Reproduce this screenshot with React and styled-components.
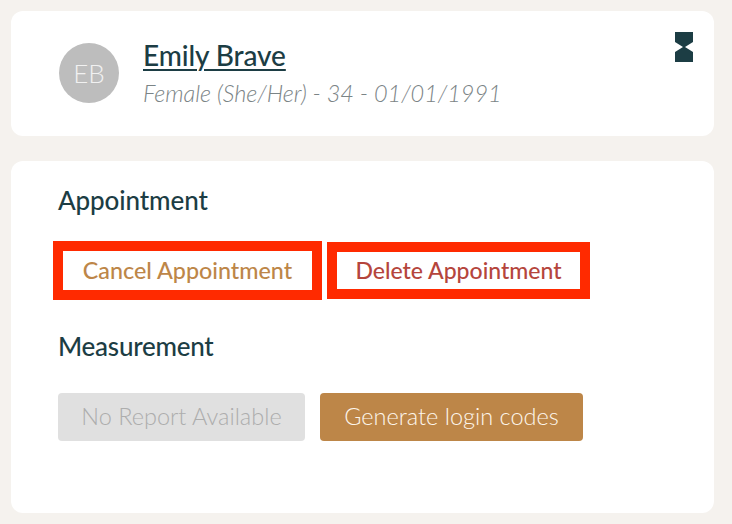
import React from 'react'
import styled, { createGlobalStyle } from 'styled-components'

const GlobalStyle = createGlobalStyle`
  html, body {
    margin: 0;
    padding: 0;
    background: #f5f2ee;
    font-family: Lato, "Open Sans", sans-serif;
  }
`

const Page = styled.div`
  width: 732px;
  height: 524px;
  box-sizing: border-box;
  padding: 11px 18px 11px 11px;
  display: flex;
  flex-direction: column;
  gap: 25px;
  overflow: hidden;
`

const Card = styled.section`
  background: #fff;
  border-radius: 12px;
  box-sizing: border-box;
`

const PatientCard = styled(Card)`
  height: 125px;
  padding: 32px 21px 0 48px;
  display: flex;
  align-items: flex-start;
`

const Avatar = styled.div`
  width: 60px;
  height: 60px;
  border-radius: 50%;
  background: #bdbdbd;
  color: #f1f1f1;
  font-size: 26px;
  font-weight: 300;
  display: flex;
  align-items: center;
  justify-content: center;
  flex-shrink: 0;
`

const PatientInfo = styled.div`
  margin-left: 24px;
  margin-top: -5px;
  flex: 1;
`

const Name = styled.a`
  display: inline-block;
  color: #1c3d44;
  font-size: 28px;
  line-height: 34px;
  font-weight: 500;
  letter-spacing: -0.1px;
  text-decoration: underline;
  text-decoration-thickness: 2px;
  text-underline-offset: 3px;
`

const Details = styled.div`
  margin-top: 7px;
  color: #7b8486;
  font-size: 23.5px;
  line-height: 28px;
  font-style: italic;
  font-weight: 300;
  letter-spacing: -0.05px;
`

const Hourglass = styled.svg`
  width: 18px;
  height: 30px;
  flex-shrink: 0;
  margin-top: -11px;
`

const ActionsCard = styled(Card)`
  height: 352px;
  padding: 23px 47px 0;
`

const Heading = styled.h2`
  margin: ${props => props.$margin || 0};
  color: #1c3d44;
  font-size: 26px;
  line-height: 32px;
  font-weight: 500;
  letter-spacing: ${props => props.$tracking || -0.1}px;
`

const Row = styled.div`
  display: flex;
  align-items: ${props => props.$center ? 'center' : 'flex-start'};
  gap: ${props => props.$gap}px;
  margin: ${props => props.$margin};
`

const OutlinedAction = styled.button`
  box-sizing: border-box;
  width: ${props => props.$width}px;
  height: ${props => props.$height}px;
  padding: 0 0 2px;
  border: 10px solid #ff2a00;
  background: #fff;
  color: ${props => props.$color};
  font-family: inherit;
  font-size: ${props => props.$size}px;
  font-weight: 500;
  text-align: center;
`

const SolidAction = styled.button`
  box-sizing: border-box;
  width: ${props => props.$width}px;
  height: 48px;
  padding: 0 0 2px;
  border: 0;
  border-radius: 4px;
  background: ${props => props.$disabled ? '#e0e0e0' : '#bd8648'};
  color: ${props => props.$disabled ? '#adadad' : '#fdf6ec'};
  font-family: inherit;
  font-size: 23.5px;
  font-weight: 300;
  text-align: center;
`

export default function App() {
  return (
    <Page>
      <GlobalStyle />
      <PatientCard>
        <Avatar>EB</Avatar>
        <PatientInfo>
          <Name href="#">Emily Brave</Name>
          <Details>Female (She/Her) - 34 - 01/01/1991</Details>
        </PatientInfo>
        <Hourglass viewBox="0 0 18 30">
          <polygon fill="#1c3d44" points="0,0 18,0 18,10 10,15 18,20 18,30 0,30 0,20 8,15 0,10" />
        </Hourglass>
      </PatientCard>
      <ActionsCard>
        <Heading>Appointment</Heading>
        <Row $center $gap={5} $margin="25px 0 0 -5px">
          <OutlinedAction $width={269} $height={59} $size={23.3} $color="#bd8648">Cancel Appointment</OutlinedAction>
          <OutlinedAction $width={263} $height={57} $size={23} $color="#b5453c">Delete Appointment</OutlinedAction>
        </Row>
        <Heading $margin="30px 0 0" $tracking={-0.25}>Measurement</Heading>
        <Row $gap={15} $margin="31px 0 0">
          <SolidAction $width={247} $disabled>No Report Available</SolidAction>
          <SolidAction $width={263}>Generate login codes</SolidAction>
        </Row>
      </ActionsCard>
    </Page>
  )
}
